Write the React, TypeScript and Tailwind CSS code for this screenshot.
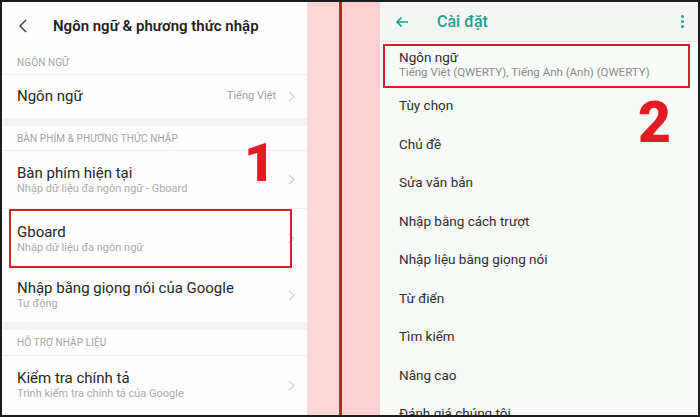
import { ReactNode } from "react";

const leftRows = {
  keyboard: { title: "Bàn phím hiện tại", sub: "Nhập dữ liệu đa ngôn ngữ - Gboard" },
  gboard: { title: "Gboard", sub: "Nhập dữ liệu đa ngôn ngữ" },
  voice: { title: "Nhập bằng giọng nói của Google", sub: "Tự động" },
  spell: { title: "Kiểm tra chính tả", sub: "Trình kiểm tra chính tả của Google" },
};

const rightItems = [
  "Tùy chọn",
  "Chủ đề",
  "Sửa văn bản",
  "Nhập bằng cách trượt",
  "Nhập liệu bằng giọng nói",
  "Từ điển",
  "Tìm kiếm",
  "Nâng cao",
  "Đánh giá chúng tôi",
];

function Chevron() {
  return (
    <svg width="7" height="11" viewBox="0 0 7 11" className="shrink-0">
      <polyline points="1,1 6,5.5 1,10" fill="none" stroke="#cfcfcf" strokeWidth="1.2" />
    </svg>
  );
}

function SectionLabel({ children, h }: { children: ReactNode; h: string }) {
  return (
    <div className={`${h} flex items-center px-[15px] border-b border-[#efefef] text-[10px] text-[#a3a3a3] tracking-[0.01em]`}>
      {children}
    </div>
  );
}

function TwoLineRow({
  title,
  sub,
  h,
  boxed,
  divider,
}: {
  title: string;
  sub: string;
  h: string;
  boxed?: boolean;
  divider?: boolean;
}) {
  return (
    <div className={`relative ${h} flex items-center pl-[15px] pr-[12px] ${divider ? "border-b border-[#f0f0f0]" : ""}`}>
      <div className="flex-1 flex flex-col">
        <span className="text-[15px] leading-[18px] text-[#262626]">{title}</span>
        <span className="text-[11px] leading-[14px] text-[#ababab]">{sub}</span>
      </div>
      <Chevron />
      {boxed && <div className="absolute left-[7px] right-[15px] top-0 bottom-0 border-[2.5px] border-[#d3202b]" />}
    </div>
  );
}

function LeftPanel() {
  return (
    <div className="relative w-[305px] shrink-0 bg-[#fefefe] flex flex-col">
      <div className="h-[48px] flex items-center pl-[16px]">
        <svg width="10" height="14" viewBox="0 0 10 14">
          <polyline points="8,1 2,7 8,13" fill="none" stroke="#3a3a3a" strokeWidth="1.4" />
        </svg>
        <span className="ml-[25px] text-[15px] font-semibold text-[#1f1f1f]">Ngôn ngữ &amp; phương thức nhập</span>
      </div>
      <SectionLabel h="h-[25px]">NGÔN NGỮ</SectionLabel>
      <div className="h-[43px] flex items-center pl-[15px] pr-[12px]">
        <span className="flex-1 text-[15px] text-[#262626]">Ngôn ngữ</span>
        <span className="text-[11px] text-[#9d9d9d] mr-[12px]">Tiếng Việt</span>
        <Chevron />
      </div>
      <div className="h-[8px] bg-[#f4f4f4]" />
      <SectionLabel h="h-[25px]">BÀN PHÍM &amp; PHƯƠNG THỨC NHẬP</SectionLabel>
      <TwoLineRow {...leftRows.keyboard} h="h-[58px]" divider />
      <TwoLineRow {...leftRows.gboard} h="h-[59px]" boxed />
      <TwoLineRow {...leftRows.voice} h="h-[54px]" />
      <div className="h-[8px] bg-[#f4f4f4]" />
      <SectionLabel h="h-[26px]">HỖ TRỢ NHẬP LIỆU</SectionLabel>
      <TwoLineRow {...leftRows.spell} h="h-[58px]" />

      <span className="absolute left-[242px] top-[134px] text-[54px] font-black leading-none text-[#e31b23]">1</span>
    </div>
  );
}

function RightPanel() {
  return (
    <div className="relative flex-1 bg-[#f8faf8] flex flex-col">
      <div className="h-[40px] shrink-0 bg-[#f3f5f3] border-b border-[#e4e6e4] flex items-center pl-[15px] pr-[14px]">
        <svg width="14" height="12" viewBox="0 0 14 12">
          <path d="M13 6H2M6.5 1.5L2 6l4.5 4.5" fill="none" stroke="#1f9e8c" strokeWidth="1.6" />
        </svg>
        <span className="ml-[28px] flex-1 text-[16px] font-medium text-[#1f9e8c]">Cài đặt</span>
        <div className="flex flex-col gap-[2px]">
          <span className="w-[3px] h-[3px] rounded-full bg-[#1f9e8c]" />
          <span className="w-[3px] h-[3px] rounded-full bg-[#1f9e8c]" />
          <span className="w-[3px] h-[3px] rounded-full bg-[#1f9e8c]" />
        </div>
      </div>
      <div className="relative h-[44px] shrink-0 flex flex-col pl-[19px] pt-[7px]">
        <span className="text-[13.5px] leading-[16px] text-[#2b2b2b]">Ngôn ngữ</span>
        <span className="text-[11.5px] leading-[14px] text-[#8a8a8a]">Tiếng Việt (QWERTY), Tiếng Anh (Anh) (QWERTY)</span>
        <div className="absolute left-[3px] right-[8px] top-[2px] -bottom-[2px] border-[2.5px] border-[#d3202b]" />
      </div>
      {rightItems.map((item) => (
        <div key={item} className="h-[38.5px] shrink-0 flex items-center pl-[19px] text-[13.5px] text-[#2e2e2e]">
          {item}
        </div>
      ))}

      <span className="absolute left-[258px] top-[92px] text-[57px] font-black leading-none text-[#e31b23]">2</span>
    </div>
  );
}

export default function App() {
  return (
    <div className="w-[700px] h-[417px] overflow-hidden border-2 border-[#1c1c1c] flex font-['Roboto',sans-serif]">
      <LeftPanel />
      <div className="w-[32px] shrink-0 bg-[#fdd7d7]" />
      <div className="w-[3px] shrink-0 bg-[#cc1f2a]" />
      <div className="w-[38px] shrink-0 bg-[#fccfd3]" />
      <RightPanel />
    </div>
  );
}
